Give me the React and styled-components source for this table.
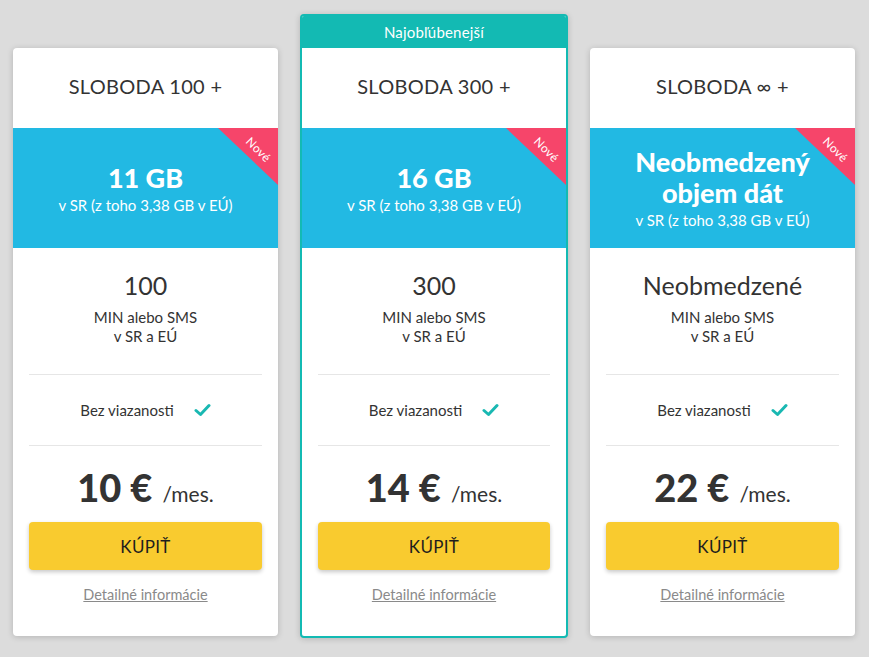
import React from "react";
import styled, { createGlobalStyle } from "styled-components";

const GlobalStyle = createGlobalStyle`
  html, body {
    margin: 0;
    padding: 0;
    background: #dcdcdc;
    font-family: Lato, "Open Sans", "DejaVu Sans", sans-serif;
    color: #333;
  }
`;

const plans = [
  {
    id: 1,
    name: "SLOBODA 100 +",
    data: "11 GB",
    minutes: "100",
    price: "10 €",
  },
  {
    id: 2,
    name: "SLOBODA 300 +",
    data: "16 GB",
    minutes: "300",
    price: "14 €",
    featured: true,
  },
  {
    id: 3,
    name: "SLOBODA ∞ +",
    data: "Neobmedzený objem dát",
    minutes: "Neobmedzené",
    price: "22 €",
  },
];

const Page = styled.div`
  display: flex;
  align-items: flex-start;
  gap: 22px;
  padding: 14px 13px 21px;
`;

// side cards sit lower so their title row lines up under the featured badge
const Card = styled.div`
  box-sizing: border-box;
  width: ${(p) => (p.$featured ? "268px" : "265px")};
  margin-top: ${(p) => (p.$featured ? "0" : "34px")};
  background: #fff;
  border-radius: 4px;
  border: ${(p) => (p.$featured ? "2px solid #13bab3" : "none")};
  box-shadow: 0 1px 6px rgba(0, 0, 0, 0.18);
  overflow: hidden;
  display: flex;
  flex-direction: column;
  text-align: center;
`;

const Badge = styled.div`
  height: 32px;
  background: #13bab3;
  color: #fff;
  font-size: 15px;
  font-weight: 400;
  display: flex;
  align-items: center;
  justify-content: center;
  letter-spacing: 0.2px;
`;

const Title = styled.div`
  box-sizing: border-box;
  height: 80px;
  padding-bottom: 5px;
  display: flex;
  align-items: center;
  justify-content: center;
  font-size: 20px;
  font-weight: 400;
  letter-spacing: 0.3px;
  color: #333;
`;

const DataBox = styled.div`
  position: relative;
  height: 120px;
  background: #22b9e3;
  color: #fff;
  display: flex;
  flex-direction: column;
  align-items: center;
  justify-content: center;
  padding: 0 16px;
`;

const DataValue = styled.div`
  font-size: 27px;
  font-weight: 900;
  line-height: 31px;
  max-width: 210px;
`;

const DataNote = styled.div`
  font-size: 15px;
  line-height: 20px;
  margin-top: 2px;
`;

const Ribbon = styled.div`
  position: absolute;
  top: 0;
  right: 0;
  width: 60px;
  height: 57px;
  background: #f6456a;
  clip-path: polygon(0 0, 100% 0, 100% 100%);
`;

const RibbonText = styled.span`
  position: absolute;
  left: 26px;
  top: 14px;
  font-size: 12px;
  color: #fff;
  transform: rotate(45deg);
  letter-spacing: 0.3px;
`;

const Minutes = styled.div`
  padding: 22px 0 28px;
`;

const MinValue = styled.div`
  font-size: 25px;
  line-height: 30px;
  font-weight: 400;
  color: #333;
`;

const MinNote = styled.div`
  margin-top: 8px;
  font-size: 15px;
  line-height: 19px;
  color: #333;
`;

const Divider = styled.div`
  margin: 0 16px;
  border-top: 1px solid #e6e6e6;
`;

const Feature = styled.div`
  height: 70px;
  display: flex;
  align-items: center;
  justify-content: center;
  gap: 20px;
  font-size: 15px;
  color: #333;
`;

const Pricing = styled.div`
  padding: 19px 16px 32px;
  display: flex;
  flex-direction: column;
  align-items: center;
`;

const Price = styled.div`
  height: 46px;
  line-height: 44px;
  white-space: nowrap;
`;

const Amount = styled.span`
  font-size: 38px;
  font-weight: 900;
  color: #333;
  margin-right: 10px;
`;

const Period = styled.span`
  font-size: 21px;
  font-weight: 400;
  color: #333;
`;

const BuyButton = styled.button`
  margin-top: 11px;
  width: 100%;
  height: 48px;
  border: none;
  border-radius: 4px;
  background: #f9cb2f;
  box-shadow: 0 2px 4px rgba(0, 0, 0, 0.22);
  font-family: inherit;
  font-size: 17px;
  font-weight: 400;
  color: #1e1e1e;
  letter-spacing: 0.3px;
  cursor: pointer;
`;

const Details = styled.a`
  margin-top: 16px;
  font-size: 14.5px;
  line-height: 18px;
  color: #8a8a8a;
  text-decoration: underline;
  cursor: pointer;
`;

const Check = () => (
  <svg width="17" height="14" viewBox="0 0 17 14">
    <path
      d="M2 7.5 L6.5 11.5 L15 2.5"
      fill="none"
      stroke="#19b8b2"
      strokeWidth="3"
      strokeLinecap="round"
      strokeLinejoin="round"
    />
  </svg>
);

const PlanCard = ({ plan }) => (
  <Card $featured={plan.featured}>
    {plan.featured && <Badge>Najobľúbenejší</Badge>}
    <Title>{plan.name}</Title>
    <DataBox>
      <Ribbon>
        <RibbonText>Nové</RibbonText>
      </Ribbon>
      <DataValue>{plan.data}</DataValue>
      <DataNote>v SR (z toho 3,38 GB v EÚ)</DataNote>
    </DataBox>
    <Minutes>
      <MinValue>{plan.minutes}</MinValue>
      <MinNote>
        MIN alebo SMS
        <br />v SR a EÚ
      </MinNote>
    </Minutes>
    <Divider />
    <Feature>
      <span>Bez viazanosti</span>
      <Check />
    </Feature>
    <Divider />
    <Pricing>
      <Price>
        <Amount>{plan.price}</Amount>
        <Period>/mes.</Period>
      </Price>
      <BuyButton>KÚPIŤ</BuyButton>
      <Details>Detailné informácie</Details>
    </Pricing>
  </Card>
);

export default function App() {
  return (
    <>
      <GlobalStyle />
      <Page>
        {plans.map((p) => (
          <PlanCard key={p.id} plan={p} />
        ))}
      </Page>
    </>
  );
}
